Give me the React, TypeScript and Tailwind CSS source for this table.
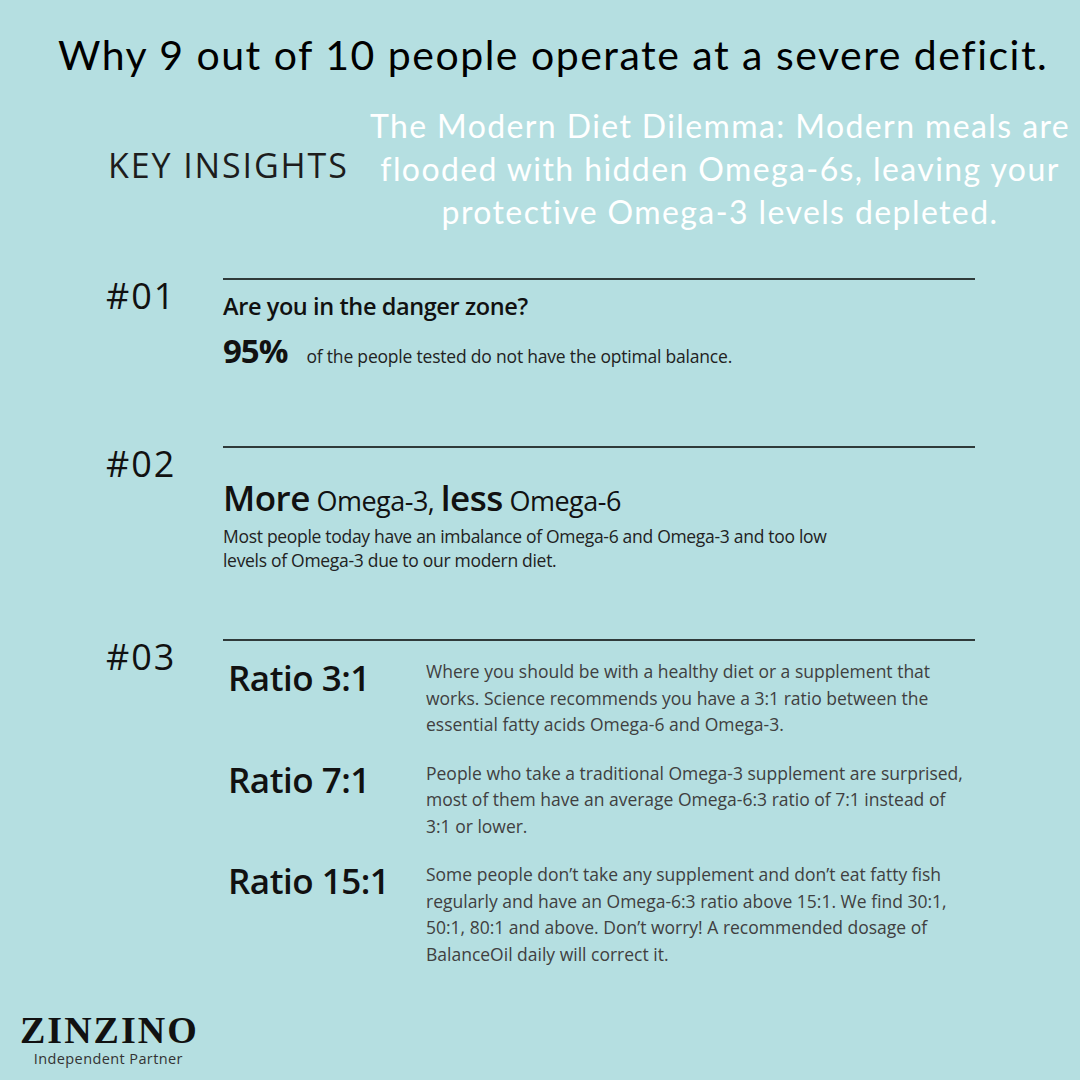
import React from 'react';

const body = { fontFamily: '"Open Sans", "Liberation Sans", sans-serif' };
const hand = { fontFamily: 'Lato, "DejaVu Sans", sans-serif' };

// regels volgen de afbreking in het ontwerp
const ratios = [
  {
    label: 'Ratio 3:1',
    lines: [
      'Where you should be with a healthy diet or a supplement that',
      'works. Science recommends you have a 3:1 ratio between the',
      'essential fatty acids Omega-6 and Omega-3.',
    ],
  },
  {
    label: 'Ratio 7:1',
    lines: [
      'People who take a traditional Omega-3 supplement are surprised,',
      'most of them have an average Omega-6:3 ratio of 7:1 instead of',
      '3:1 or lower.',
    ],
  },
  {
    label: 'Ratio 15:1',
    lines: [
      'Some people don’t take any supplement and don’t eat fatty fish',
      'regularly and have an Omega-6:3 ratio above 15:1. We find 30:1,',
      '50:1, 80:1 and above. Don’t worry! A recommended dosage of',
      'BalanceOil daily will correct it.',
    ],
  },
];

export default function App() {
  return (
    <div className="w-[1080px] h-[1080px] bg-[#b5dfe1] relative overflow-hidden flex flex-col" style={body}>
      {/* titel */}
      <h1 className="pt-[30px] pl-[58px] text-[41px] leading-[50px] text-black tracking-[1.5px] whitespace-nowrap" style={hand}>
        Why 9 out of 10 people operate at a severe deficit.
      </h1>

      <div className="flex items-start mt-[24px]">
        <div className="w-[362px] pl-[108px] mt-[44px] text-[34px] leading-[34px] text-[#1d1d1d] tracking-[1.9px] whitespace-nowrap">KEY INSIGHTS</div>
        <p className="w-[716px] text-center text-white text-[32px] leading-[43px] tracking-[1.4px]" style={hand}>
          The Modern Diet Dilemma: Modern meals are flooded with hidden Omega-6s, leaving your protective Omega-3 levels depleted.
        </p>
      </div>

      {/* #01 */}
      <div className="flex mt-[45px] pl-[106px]">
        <div className="w-[117px] text-[36px] leading-[35px] tracking-[2px] text-[#111]">#01</div>
        <div className="w-[752px]">
          <div className="border-t-2 border-[#2f3a3a]" />
          <div className="mt-[10px] text-[23.5px] leading-[32px] font-semibold text-[#111] tracking-[-0.4px]">Are you in the danger zone?</div>
          <div className="mt-[9px] flex items-baseline gap-[19px] h-[40px]">
            <span className="text-[33px] leading-[40px] font-bold text-[#111] tracking-[-1px]">95%</span>
            <span className="text-[17.5px] text-[#222] tracking-[-0.2px]">of the people tested do not have the optimal balance.</span>
          </div>
        </div>
      </div>

      {/* #02 */}
      <div className="flex mt-[75px] pl-[106px]">
        <div className="w-[117px] text-[36px] leading-[35px] tracking-[2px] text-[#111]">#02</div>
        <div className="w-[752px]">
          <div className="border-t-2 border-[#2f3a3a]" />
          <div className="mt-[28px] h-[44px] leading-[44px] text-[#111] tracking-[-0.5px] whitespace-nowrap">
            <span className="text-[35px] font-semibold">More</span>
            <span className="text-[27px]"> Omega-3, </span>
            <span className="text-[35px] font-semibold">less</span>
            <span className="text-[27px]"> Omega-6</span>
          </div>
          <p className="mt-[4px] w-[640px] text-[17.5px] leading-[24px] text-[#222] tracking-[-0.3px]">
            Most people today have an imbalance of Omega-6 and Omega-3 and too low levels of Omega-3 due to our modern diet.
          </p>
        </div>
      </div>

      {/* #03 */}
      <div className="flex mt-[67px] pl-[106px]">
        <div className="w-[117px] text-[36px] leading-[35px] tracking-[2px] text-[#111]">#03</div>
        <div className="w-[752px]">
          <div className="border-t-2 border-[#2f3a3a]" />
          <div className="mt-[17px] flex flex-col gap-[22px]">
            {ratios.map((r) => (
              <div key={r.label} className="flex">
                <div className="w-[203px] pl-[5px] text-[35px] font-semibold text-[#111] tracking-[-0.5px] leading-[40px] whitespace-nowrap">{r.label}</div>
                <p className="text-[17.5px] leading-[26.5px] text-[#404040] tracking-[0px] whitespace-nowrap">
                  {r.lines.map((l, i) => (
                    <span key={i} className="block">{l}</span>
                  ))}
                </p>
              </div>
            ))}
          </div>
        </div>
      </div>

      {/* logo */}
      <div className="absolute left-[20px] top-[1011px] flex flex-col items-center">
        <div className="text-[38px] leading-[39px] font-bold text-[#111] tracking-[2px] mr-[-2px]" style={{ fontFamily: '"Liberation Serif", "DejaVu Serif", serif' }}>
          ZINZINO
        </div>
        <div className="text-[14.5px] leading-[18px] text-[#333] mt-[0px] tracking-[0.4px]">Independent Partner</div>
      </div>
    </div>
  );
}
